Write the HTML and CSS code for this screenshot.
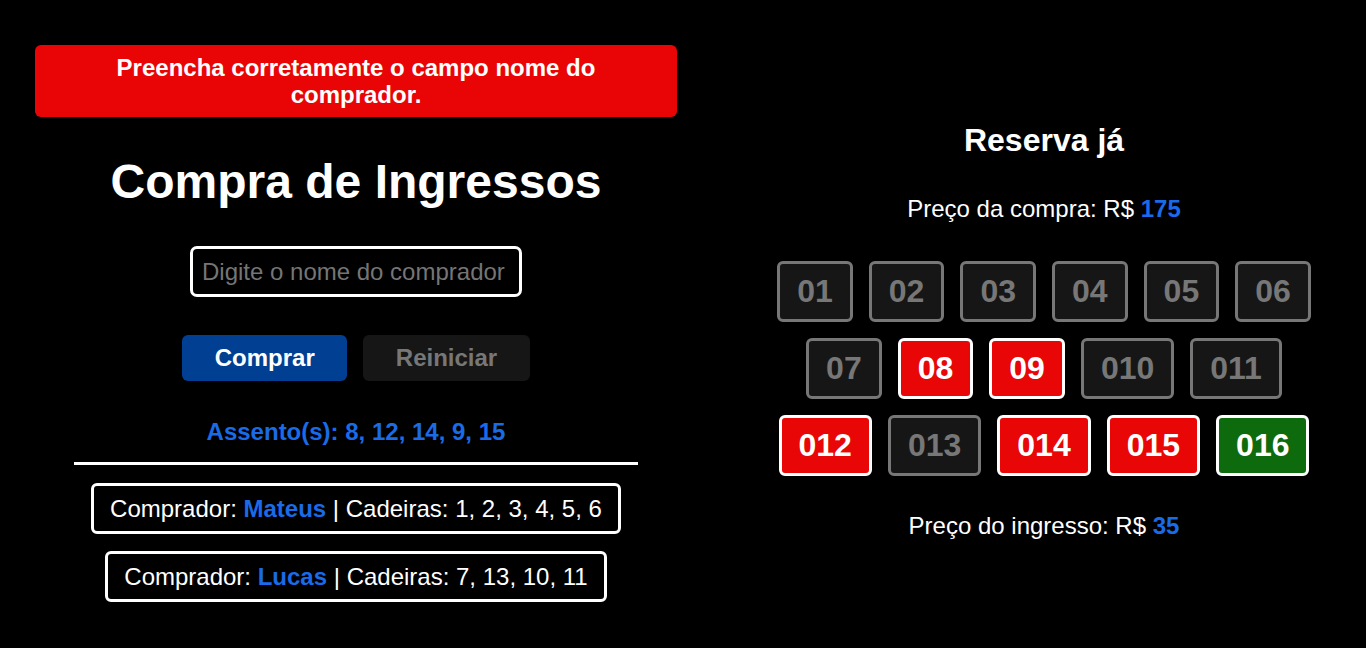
FILE: index.html
```html
<!DOCTYPE html>
<html lang="pt-BR">
<head>
<meta charset="utf-8">
<title>Compra de Ingressos</title>
<link rel="stylesheet" href="styles.css">
</head>
<body>
<main class="page">
  <section class="left">
    <div class="alert">Preencha corretamente o campo nome do comprador.</div>
    <h1 class="title">Compra de Ingressos</h1>
    <input class="name-input" type="text" placeholder="Digite o nome do comprador">
    <div class="actions">
      <button class="btn btn-primary">Comprar</button>
      <button class="btn btn-muted">Reiniciar</button>
    </div>
    <p class="seats-selected">Assento(s): 8, 12, 14, 9, 15</p>
    <hr class="divider">
    <div class="purchase">Comprador: <strong class="hl">Mateus</strong> | Cadeiras: 1, 2, 3, 4, 5, 6</div>
    <div class="purchase">Comprador: <strong class="hl">Lucas</strong> | Cadeiras: 7, 13, 10, 11</div>
  </section>
  <section class="right">
    <h2 class="subtitle">Reserva já</h2>
    <p class="price">Preço da compra: R$ <strong class="hl">175</strong></p>
    <div class="seats">
      <span class="seat">01</span>
      <span class="seat">02</span>
      <span class="seat">03</span>
      <span class="seat">04</span>
      <span class="seat">05</span>
      <span class="seat">06</span>
      <span class="seat">07</span>
      <span class="seat selected">08</span>
      <span class="seat selected">09</span>
      <span class="seat">010</span>
      <span class="seat">011</span>
      <span class="seat selected">012</span>
      <span class="seat">013</span>
      <span class="seat selected">014</span>
      <span class="seat selected">015</span>
      <span class="seat free">016</span>
    </div>
    <p class="price price-bottom">Preço do ingresso: R$ <strong class="hl">35</strong></p>
  </section>
</main>
</body>
</html>
```

FILE: styles.css
```css
* { box-sizing: border-box; }
html, body {
  margin: 0;
  padding: 0;
  background: #000;
  color: #fff;
  font-family: "Liberation Sans", Arial, sans-serif;
  height: 100%;
}
.page {
  display: grid;
  grid-template-columns: 642px 1fr;
  column-gap: 45px;
  padding: 45px 0 0 35px;
}
.left, .right {
  display: flex;
  flex-direction: column;
  align-items: center;
  text-align: center;
}
.alert {
  width: 100%;
  height: 72px;
  background: #e90505;
  color: #fff;
  font-weight: bold;
  font-size: 24px;
  line-height: 27px;
  padding: 9px 70px;
  border-radius: 6px;
}
.title {
  margin: 37px 0 0;
  font-size: 48px;
  line-height: 55px;
  font-weight: bold;
}
.name-input {
  margin-top: 37px;
  width: 332px;
  height: 51px;
  background: #000;
  color: #fff;
  border: 3px solid #fff;
  border-radius: 7px;
  padding: 0 9px;
  font-family: inherit;
  font-size: 24px;
  outline: none;
}
.name-input::placeholder { color: #757575; }
.actions {
  margin-top: 38px;
  display: flex;
  gap: 16px;
}
.btn {
  border: none;
  border-radius: 6px;
  font-family: inherit;
  font-weight: bold;
  font-size: 24px;
  line-height: 28px;
  height: 46px;
  padding: 0 32.5px;
}
.btn-primary { background: #003f91; color: #fff; }
.btn-muted { background: #161616; color: #777; }
.seats-selected {
  margin: 37px 0 0;
  color: #1a6be8;
  font-weight: bold;
  font-size: 24px;
  line-height: 28px;
}
.divider {
  width: 564px;
  margin: 16px 0 0;
  border: none;
  height: 3px;
  background: #fff;
}
.purchase {
  margin-top: 18px;
  height: 51px;
  border: 3px solid #fff;
  border-radius: 6px;
  padding: 0 16.5px;
  font-size: 24px;
  line-height: 45px;
}
.purchase + .purchase { margin-top: 17px; }
.hl { color: #1a6be8; font-weight: bold; }
.subtitle {
  margin: 77px 0 0;
  font-size: 32px;
  line-height: 37px;
}
.price {
  margin: 36px 0 0;
  font-size: 24px;
  line-height: 28px;
}
.seats {
  margin-top: 38px;
  width: 560px;
  display: flex;
  flex-wrap: wrap;
  justify-content: center;
  column-gap: 16px;
  row-gap: 16px;
}
.seat {
  display: inline-block;
  background: #161616;
  color: #777;
  border: 3px solid #777;
  border-radius: 6px;
  font-weight: bold;
  font-size: 32px;
  line-height: 35px;
  padding: 10px 17px;
}
.seat.selected { background: #e80606; color: #fff; border-color: #fff; }
.seat.free { background: #0d6b0d; color: #fff; border-color: #fff; }
.price-bottom { margin-top: 36px; }
```
